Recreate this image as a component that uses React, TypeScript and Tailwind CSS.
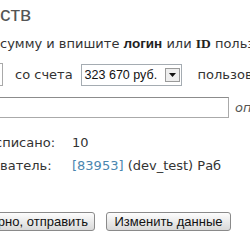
import React from 'react';

const sans = { fontFamily: '"DejaVu Sans", Verdana, sans-serif' };

const App: React.FC = () => {
  return (
    <div
      className="w-[250px] h-[250px] overflow-hidden bg-white text-[13px] text-[#333] whitespace-nowrap"
      style={sans}
    >
      {/* heading */}
      <div className="h-[27px] leading-[27px] text-[21px] text-[#555] font-['Liberation_Sans',Arial,sans-serif]">
        ств
      </div>

      {/* hint line */}
      <div className="mt-[8px] h-[18px] leading-[18px]">
        сумму и впишите{' '}
        <b className="text-[#222] text-[13.5px] font-['Liberation_Sans',Arial,sans-serif]">логин</b> или{' '}
        <b className="text-[#222] text-[13.5px] font-['Liberation_Serif','Times_New_Roman',serif]">ID</b> пользователя
      </div>

      {/* amount + account */}
      <div className="mt-[10px] h-[23px] flex items-center leading-[18px]">
        <input className="shrink-0 -ml-[57px] w-[60px] h-[23px] border border-[#a9a9a9] bg-white" />
        <span className="shrink-0 ml-[12px]">со счета</span>
        <div className="shrink-0 ml-[8px] w-[101px] h-[22px] flex items-center border border-[#a5acb2] bg-white">
          <span className="pl-[3px] flex-1 text-[12.5px] text-[#111] font-['Liberation_Sans',Arial,sans-serif]">
            323 670 руб.
          </span>
          <span className="mr-[1px] w-[15px] h-[14px] flex items-center justify-center border border-[#9a9a9a] bg-[#eeeeee]">
            <svg width="7" height="4" viewBox="0 0 7 4">
              <path d="M0 0h7L3.5 4z" fill="#111" />
            </svg>
          </span>
        </div>
        <span className="shrink-0 ml-[16px]">пользователю</span>
      </div>

      {/* recipient */}
      <div className="mt-[11px] h-[21px] flex items-center leading-[18px]">
        <input className="shrink-0 -ml-[11px] w-[240px] h-[21px] border border-[#aaaaaa] border-t-[#8c8c8c] bg-white" />
        <span className="shrink-0 ml-[6px] italic text-[#555]">описание</span>
      </div>

      {/* summary */}
      <div className="mt-[13px] grid grid-cols-[72px_auto] leading-[23px]">
        <span className="-ml-[5px]">списано:</span>
        <span>10</span>
        <span>ватель:</span>
        <span>
          <a className="text-[#4a86b0]">[83953]</a> (dev_test) Раб
        </span>
      </div>

      {/* actions */}
      <div className="mt-[35px] flex gap-[11px] font-['Liberation_Sans',Arial,sans-serif] text-[13px] text-[#111]">
        <button className="shrink-0 -ml-[25px] w-[120px] h-[19px] leading-[17px] rounded-[3px] border border-[#8a8a8a] bg-gradient-to-b from-[#fdfdfd] to-[#d9d9d9]">
          Верно, отправить
        </button>
        <button className="shrink-0 w-[125px] h-[19px] leading-[17px] rounded-[3px] border border-[#8a8a8a] bg-gradient-to-b from-[#fdfdfd] to-[#d9d9d9]">
          Изменить данные
        </button>
      </div>
    </div>
  );
};

export default App;
